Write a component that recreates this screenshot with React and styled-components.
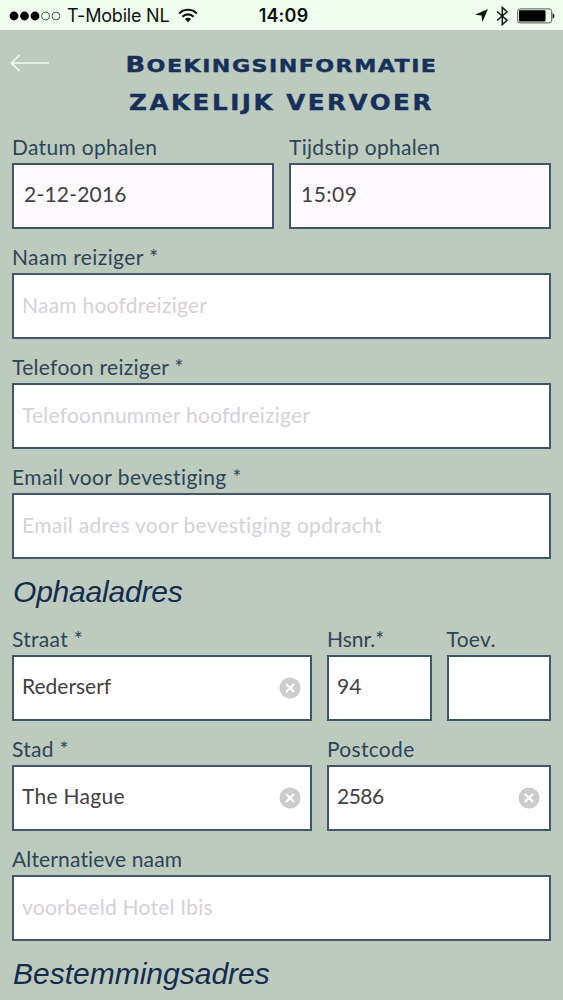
import styled, { createGlobalStyle } from "styled-components";

const GlobalStyle = createGlobalStyle`
  * {
    box-sizing: border-box;
  }

  body {
    margin: 0;
    background-color: #bdcabe;
  }
`;

const Screen = styled.div`
  width: 563px;
  height: 1000px;
  overflow: hidden;
  background-color: #bdcabe;
  font-family: Lato, "Open Sans", sans-serif;
`;

const StatusBar = styled.header`
  display: grid;
  grid-template-columns: 1fr auto 1fr;
  align-items: center;
  height: 30px;
  padding: 1px 8px 0 9px;
  background-color: #effeed;
  color: #111;
  font-family: Inter, "Liberation Sans", sans-serif;
  font-size: 18px;
`;

const StatusLeft = styled.div`
  display: flex;
  align-items: center;
`;

const StatusRight = styled.div`
  display: flex;
  align-items: center;
  justify-content: flex-end;
  gap: 8px;
`;

const Carrier = styled.span`
  margin: 0 9px 0 6px;
  letter-spacing: -0.2px;
  white-space: nowrap;
`;

const Time = styled.span`
  padding-left: 3px;
  font-weight: 600;
  letter-spacing: 0.2px;
`;

const Top = styled.div`
  display: grid;
  grid-template-columns: 50px 1fr 50px;
  height: 103px;
  padding-top: 15px;
`;

const BackButton = styled.button`
  align-self: start;
  display: flex;
  padding: 8px 0 0 10px;
  border: none;
  background: none;
`;

const Title = styled.h1`
  margin: 0;
  color: #17305a;
  font-family: "DejaVu Sans", sans-serif;
  font-weight: 700;
  line-height: 39px;
  text-align: center;
  text-transform: uppercase;
  transform: scaleX(1.2);
`;

const TitleLine = styled.span`
  display: block;
  height: 39px;
  font-size: ${(props) => props.$size};
  letter-spacing: ${(props) => props.$track};
  white-space: nowrap;
  -webkit-text-stroke: 0.4px #17305a;

  &::first-letter {
    font-size: ${(props) => props.$first || "inherit"};
  }
`;

const Form = styled.form`
  padding: 0 12px;
`;

const Row = styled.div`
  display: grid;
  grid-template-columns: ${(props) => props.$cols || "1fr"};
  column-gap: 15px;
  height: 110px;
`;

const Label = styled.label`
  display: flex;
  flex-direction: column;
  min-width: 0;
  color: #2e4557;
  font-size: 21px;
`;

const LabelText = styled.span`
  height: 30px;
  line-height: 28px;
  letter-spacing: ${(props) => props.$track || "0.3px"};
  white-space: nowrap;
`;

const Box = styled.span`
  display: flex;
  align-items: center;
  height: 66px;
  padding: 0 9px 0 8px;
  border: 2px solid #40566b;
  background-color: ${(props) => (props.$tinted ? "#fdfafd" : "#fff")};
`;

const Input = styled.input`
  flex: 1;
  width: 100%;
  min-width: 0;
  padding: 0 0 ${(props) => (props.placeholder ? "4px" : "6px")}
    ${(props) => (props.$indent ? "2px" : "0")};
  border: none;
  outline: none;
  background: none;
  color: #434043;
  font-family: inherit;
  font-size: 21px;
  letter-spacing: ${(props) => props.$track || "0.3px"};

  &::placeholder {
    color: #d6d1d7;
    opacity: 1;
  }
`;

const SectionTitle = styled.h2`
  height: 52px;
  margin: 0;
  padding-left: 1px;
  color: #142c4e;
  font-family: "Liberation Sans", Arial, sans-serif;
  font-style: italic;
  font-weight: 400;
  font-size: 30px;
  line-height: 38px;
  letter-spacing: ${(props) => props.$track || "0"};
`;

const Signal = () => (
  <svg width="52" height="10" viewBox="0 0 52 10">
    {[0, 1, 2, 3, 4].map((i) => (
      <circle
        key={i}
        cx={5 + i * 10.5}
        cy="5"
        r={i < 3 ? 4.4 : 4}
        fill={i < 3 ? "#000" : "none"}
        stroke={i < 3 ? "none" : "#444"}
        strokeWidth="0.9"
      />
    ))}
  </svg>
);

const Wifi = () => (
  <svg width="20" height="15" viewBox="0 0 20 15" fill="none" stroke="#111" strokeWidth="2.1">
    <path d="M1.2 5.4a12.4 12.4 0 0 1 17.6 0" />
    <path d="M4.4 8.7a7.9 7.9 0 0 1 11.2 0" />
    <path d="M10 14.2 6.9 11.1a4.4 4.4 0 0 1 6.2 0z" fill="#111" stroke="none" />
  </svg>
);

const Location = () => (
  <svg width="13" height="13" viewBox="0 0 13 13">
    <path d="M13 0 7.4 13 6.5 6.6 0 5.8z" fill="#111" />
  </svg>
);

const Bluetooth = () => (
  <svg width="13" height="20" viewBox="0 0 13 20" fill="none" stroke="#111" strokeWidth="1.5">
    <path d="M1 5.5 11 14.3 6.3 18.6V1.4L11 5.7 1 14.5" />
  </svg>
);

const Battery = () => (
  <svg width="38" height="16" viewBox="0 0 38 16">
    <rect x="0.7" y="0.9" width="34" height="14" rx="2.6" fill="none" stroke="#555" strokeWidth="1" />
    <rect x="2" y="2.2" width="26.5" height="11.4" rx="1" fill="#000" />
    <path d="M35.6 5.2c2.4.8 2.4 4.6 0 5.4z" fill="#111" />
  </svg>
);

const BackArrow = () => (
  <svg width="40" height="20" viewBox="0 0 40 20" fill="none" stroke="#f2faf0" strokeWidth="1.7">
    <path d="M39 10H1.5M9.5 2 1.5 10l8 8" />
  </svg>
);

const Clear = () => (
  <svg width="22" height="22" viewBox="0 0 22 22">
    <circle cx="11" cy="11" r="10.5" fill="#cdcbcd" />
    <path d="m7 7 8 8M15 7l-8 8" stroke="#fff" strokeWidth="2.4" />
  </svg>
);

const Field = ({ label, track, value, placeholder, inputTrack, tinted, clearable }) => (
  <Label>
    <LabelText $track={track}>{label}</LabelText>
    <Box $tinted={tinted}>
      <Input
        defaultValue={value}
        placeholder={placeholder}
        $track={inputTrack}
        $indent={tinted}
      />
      {clearable && <Clear />}
    </Box>
  </Label>
);

const App = () => {
  return (
    <Screen>
      <GlobalStyle />
      <StatusBar>
        <StatusLeft>
          <Signal />
          <Carrier>T-Mobile NL</Carrier>
          <Wifi />
        </StatusLeft>
        <Time>14:09</Time>
        <StatusRight>
          <Location />
          <Bluetooth />
          <Battery />
        </StatusRight>
      </StatusBar>
      <Top>
        <BackButton type="button" aria-label="Terug">
          <BackArrow />
        </BackButton>
        <Title>
          <TitleLine $size="18.5px" $track="1.2px" $first="21.5px">
            Boekingsinformatie
          </TitleLine>
          <TitleLine $size="20.5px" $track="2.1px">
            zakelijk vervoer
          </TitleLine>
        </Title>
      </Top>
      <Form>
        <Row $cols="1fr 1fr">
          <Field label="Datum ophalen" value="2-12-2016" inputTrack="0.2px" tinted />
          <Field label="Tijdstip ophalen" value="15:09" inputTrack="0.5px" tinted />
        </Row>
        <Row>
          <Field
            label="Naam reiziger *"
            track="0.4px"
            placeholder="Naam hoofdreiziger"
            inputTrack="0.25px"
          />
        </Row>
        <Row>
          <Field
            label="Telefoon reiziger *"
            placeholder="Telefoonnummer hoofdreiziger"
            inputTrack="0.2px"
          />
        </Row>
        <Row>
          <Field
            label="Email voor bevestiging *"
            track="0.4px"
            placeholder="Email adres voor bevestiging opdracht"
          />
        </Row>
        <SectionTitle $track="-0.2px">Ophaaladres</SectionTitle>
        <Row $cols="300px 1fr 1fr">
          <Field label="Straat *" value="Rederserf" inputTrack="0" clearable />
          <Field label="Hsnr.*" track="0" value="94" inputTrack="0" />
          <Field label="Toev." />
        </Row>
        <Row $cols="300px 1fr">
          <Field label="Stad *" value="The Hague" clearable />
          <Field label="Postcode" value="2586" inputTrack="-0.5px" clearable />
        </Row>
        <Row>
          <Field
            label="Alternatieve naam"
            track="0.15px"
            placeholder="voorbeeld Hotel Ibis"
            inputTrack="0.25px"
          />
        </Row>
        <SectionTitle>Bestemmingsadres</SectionTitle>
      </Form>
    </Screen>
  );
};

export default App;
